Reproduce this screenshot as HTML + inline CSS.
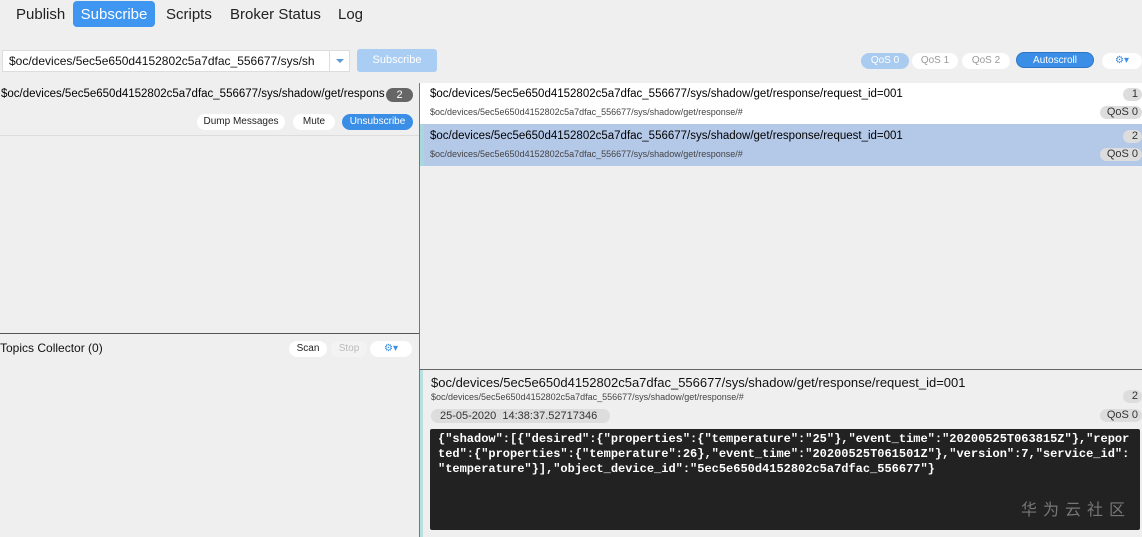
<!DOCTYPE html>
<html><head><style>
*{box-sizing:border-box;margin:0;padding:0}
body{width:1142px;height:537px;background:#efefef;font-family:"Liberation Sans",sans-serif;position:relative;overflow:hidden;color:#111}
.a{position:absolute}
.tab{position:absolute;top:1px;height:26px;line-height:27px;font-size:15px;color:#222;padding:0 9px}
.pill{position:absolute;height:16px;line-height:16px;font-size:10px;border-radius:8px;text-align:center;background:#fff;color:#222}
.badge{position:absolute;height:13px;line-height:13px;font-size:11px;border-radius:7px;background:#ddd;color:#333;text-align:right;padding:0 4px}
.t1{position:absolute;font-size:11.5px;color:#000;white-space:nowrap}
.t2{position:absolute;font-size:9px;color:#444;white-space:nowrap}
</style></head><body>
<div class="tab" style="left:7px">Publish</div>
<div class="tab" style="left:73px;background:#3e96f0;color:#fff;border-radius:4px;width:82px;text-align:center;padding:0">Subscribe</div>
<div class="tab" style="left:157px">Scripts</div>
<div class="tab" style="left:221px">Broker Status</div>
<div class="tab" style="left:329px">Log</div>

<div class="a" style="left:2px;top:50px;width:348px;height:22px;background:#fff;border:1px solid #ddd"></div>
<div class="a" style="left:9px;top:54px;font-size:12px">$oc/devices/5ec5e650d4152802c5a7dfac_556677/sys/sh</div>
<div class="a" style="left:329px;top:51px;width:1px;height:20px;background:#ddd"></div>
<div class="a" style="left:336px;top:59px;border:4px solid transparent;border-top:4px solid #5a9ad8"></div>
<div class="a" style="left:357px;top:49px;width:80px;height:23px;background:#a9cdf3;border-radius:3px;color:#fff;font-size:11px;text-align:center;line-height:23px">Subscribe</div>

<div class="pill" style="left:861px;top:53px;width:48px;background:#a9cbef;color:#fff">QoS 0</div>
<div class="pill" style="left:912px;top:53px;width:46px;color:#999">QoS 1</div>
<div class="pill" style="left:962px;top:53px;width:48px;color:#999">QoS 2</div>
<div class="pill" style="left:1016px;top:52px;width:78px;background:#3a8ee6;color:#fff;border:1px solid #2b75c5">Autoscroll</div>
<div class="pill" style="left:1102px;top:53px;width:40px;color:#3a8ee6">⚙▾</div>

<div class="a" style="left:0;top:333px;width:419px;height:1px;background:#555"></div>
<div class="t1" style="left:1px;top:88px;width:384px;overflow:hidden">$oc/devices/5ec5e650d4152802c5a7dfac_556677/sys/shadow/get/response/#</div>
<div class="a" style="left:386px;top:88px;width:27px;height:14px;background:#666;color:#fff;border-radius:7px;font-size:11px;text-align:center;line-height:14px">2</div>
<div class="pill" style="left:197px;top:114px;width:88px">Dump Messages</div>
<div class="pill" style="left:293px;top:114px;width:42px">Mute</div>
<div class="pill" style="left:342px;top:114px;width:71px;background:#3a8ee6;color:#fff">Unsubscribe</div>
<div class="a" style="left:0;top:135px;width:419px;height:1px;background:#ddd"></div>
<div class="a" style="left:0;top:341px;font-size:12px">Topics Collector (0)</div>
<div class="pill" style="left:289px;top:341px;width:38px">Scan</div>
<div class="pill" style="left:331px;top:341px;width:36px;color:#bbb;background:#f3f3f3">Stop</div>
<div class="pill" style="left:370px;top:341px;width:42px;color:#3a8ee6">⚙▾</div>
<div class="a" style="left:419px;top:83px;width:1px;height:454px;background:#777"></div>

<div class="a" style="left:420px;top:83px;width:722px;height:41px;background:#fff"></div>
<div class="a" style="left:420px;top:124px;width:722px;height:42px;background:#b4c8e8"></div>
<div class="a" style="left:420px;top:124px;width:4px;height:42px;background:#a8d8dc"></div>
<div class="t1" style="left:430px;top:88px">$oc/devices/5ec5e650d4152802c5a7dfac_556677/sys/shadow/get/response/request_id=001</div>
<div class="t2" style="left:430px;top:107px">$oc/devices/5ec5e650d4152802c5a7dfac_556677/sys/shadow/get/response/#</div>
<div class="badge" style="left:1123px;top:88px;width:19px">1</div>
<div class="badge" style="left:1100px;top:106px;width:42px">QoS 0</div>
<div class="t1" style="left:430px;top:130px">$oc/devices/5ec5e650d4152802c5a7dfac_556677/sys/shadow/get/response/request_id=001</div>
<div class="t2" style="left:430px;top:149px">$oc/devices/5ec5e650d4152802c5a7dfac_556677/sys/shadow/get/response/#</div>
<div class="badge" style="left:1123px;top:130px;width:19px">2</div>
<div class="badge" style="left:1100px;top:148px;width:42px">QoS 0</div>

<div class="a" style="left:420px;top:369px;width:722px;height:1px;background:#666"></div>
<div class="a" style="left:420px;top:370px;width:3px;height:167px;background:#b8e0e0"></div>
<div class="a" style="left:431px;top:375px;font-size:13px;white-space:nowrap">$oc/devices/5ec5e650d4152802c5a7dfac_556677/sys/shadow/get/response/request_id=001</div>
<div class="t2" style="left:431px;top:392px">$oc/devices/5ec5e650d4152802c5a7dfac_556677/sys/shadow/get/response/#</div>
<div class="badge" style="left:1123px;top:390px;width:19px">2</div>
<div class="a" style="left:431px;top:409px;width:179px;height:14px;background:#ddd;border-radius:7px;font-size:11px;line-height:14px;padding-left:9px;color:#333">25-05-2020&nbsp; 14:38:37.52717346</div>
<div class="badge" style="left:1100px;top:409px;width:42px">QoS 0</div>
<div class="a" style="left:430px;top:429px;width:710px;height:101px;background:#222;border-radius:2px"></div>
<div class="a" style="left:438px;top:432px;font-family:'Liberation Mono',monospace;font-weight:bold;font-size:12px;line-height:15px;color:#fff;white-space:pre">{"shadow":[{"desired":{"properties":{"temperature":"25"},"event_time":"20200525T063815Z"},"repor
ted":{"properties":{"temperature":26},"event_time":"20200525T061501Z"},"version":7,"service_id":
"temperature"}],"object_device_id":"5ec5e650d4152802c5a7dfac_556677"}</div>
<div class="a" style="left:1021px;top:501px;font-family:'Liberation Sans','Noto Sans CJK SC',sans-serif;font-size:16px;letter-spacing:6px;color:#777;line-height:20px;white-space:nowrap">华为云社区</div>
</body></html>
